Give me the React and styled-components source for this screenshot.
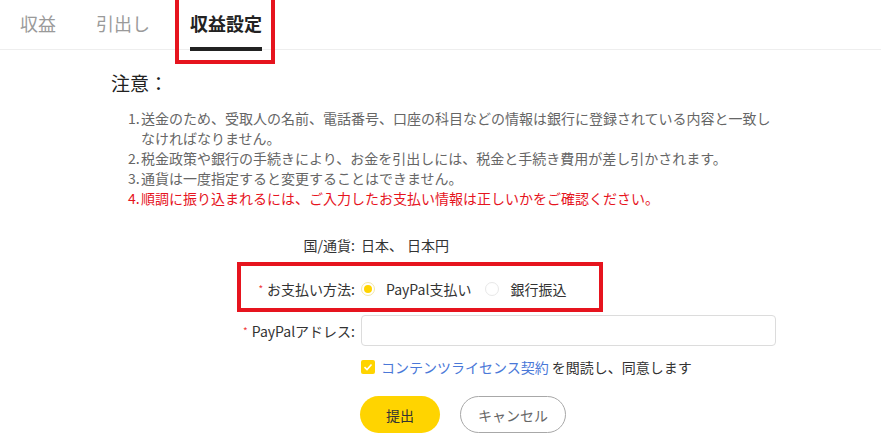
import React from "react";
import styled, { createGlobalStyle, css } from "styled-components";

const GlobalStyle = createGlobalStyle`
  html, body { margin: 0; padding: 0; background: #fff; }
  body { font-family: "Noto Sans CJK JP", "Noto Sans", sans-serif; color: #333; }
  * { box-sizing: border-box; }
`;

const Page = styled.div`
  width: 881px;
  height: 447px;
  overflow: hidden;
  background: #fff;
`;

const TabBar = styled.div`
  display: flex;
  height: 50px;
  border-bottom: 1px solid #eeeeee;
`;

const Tab = styled.div`
  position: relative;
  height: 50px;
  padding: 12px 20px 0;
  font-size: 18px;
  line-height: 22px;
  color: #9a9a9a;
  ${(p) =>
    p.$active &&
    css`
      color: #222;
      font-weight: 700;
      &::after {
        content: "";
        position: absolute;
        left: 20px;
        right: 20px;
        bottom: -1px;
        height: 4px;
        background: #222;
      }
    `}
`;

const Highlight = styled.span`
  position: absolute;
  left: ${(p) => p.$left}px;
  top: ${(p) => p.$top}px;
  width: ${(p) => p.$width}px;
  height: ${(p) => p.$height}px;
  border: 4px solid #e6141e;
  pointer-events: none;
`;

const Content = styled.div`
  padding: 20px 0 0 111px;
`;

const NoticeTitle = styled.h2`
  margin: 0;
  font-size: 19px;
  font-weight: 400;
  line-height: 26px;
  color: #222;
`;

const NoticeList = styled.ol`
  list-style: none;
  margin: 12px 0 0 17px;
  padding: 0;
  width: 660px;
`;

const NoticeItem = styled.li`
  display: flex;
  font-size: 14px;
  line-height: 20px;
  color: ${(p) => (p.$warn ? "#e6141e" : "#666")};
`;

const Num = styled.span`
  flex: 0 0 13px;
`;

const ItemText = styled.span`
  width: 640px;
`;

const Form = styled.div`
  display: flex;
  flex-direction: column;
  margin-top: 21px;
`;

const Row = styled.div`
  position: relative;
  display: grid;
  grid-template-columns: 250px auto;
  align-items: center;
  min-height: ${(p) => p.$h || 32}px;
  margin-top: ${(p) => p.$mt || 0}px;
  font-size: 14px;
  color: #333;
`;

const Label = styled.div`
  text-align: right;
  padding-right: 6px;
  font-size: 14px;
  line-height: 20px;
  color: #333;
  white-space: nowrap;
`;

const Req = styled.span`
  color: #f03a3a;
  font-size: 10px;
  margin-right: 4px;
  vertical-align: 2px;
`;

const Value = styled.div`
  line-height: 20px;
`;

const ValuePart = styled.span`
  margin-left: ${(p) => p.$ml || 0}px;
`;

const RadioGroup = styled.div`
  display: flex;
  align-items: center;
  gap: 14px;
`;

const RadioOption = styled.label`
  display: inline-flex;
  align-items: center;
  gap: 11px;
  line-height: 20px;
  color: #333;
`;

const RadioCircle = styled.span`
  position: relative;
  width: 14px;
  height: 14px;
  border-radius: 50%;
  border: 1px solid ${(p) => (p.$checked ? "#f3e6a6" : "#e8e8e8")};
  background: #fff;
  &::after {
    content: "";
    display: ${(p) => (p.$checked ? "block" : "none")};
    position: absolute;
    left: 2px;
    top: 2px;
    width: 8px;
    height: 8px;
    border-radius: 50%;
    background: #ffd400;
  }
`;

const Input = styled.input`
  width: 415px;
  height: 31px;
  border: 1px solid #dcdcdc;
  border-radius: 4px;
  outline: none;
  padding: 0 10px;
  font: inherit;
`;

const Agree = styled.div`
  display: flex;
  align-items: center;
  gap: 6px;
  line-height: 20px;
  color: #333;
`;

const CheckBox = styled.span`
  display: inline-flex;
  align-items: center;
  justify-content: center;
  width: 14px;
  height: 14px;
  border-radius: 2px;
  background: #ffd400;
`;

const Link = styled.a`
  color: #4a78d8;
  text-decoration: none;
`;

const Buttons = styled.div`
  display: flex;
  gap: 20px;
  margin-left: -1px;
`;

const Button = styled.button`
  height: 37px;
  width: ${(p) => p.$w}px;
  border-radius: 19px;
  font-family: inherit;
  font-size: 14px;
  cursor: pointer;
  ${(p) =>
    p.$primary
      ? css`
          background: #ffd400;
          border: none;
          color: #333;
        `
      : css`
          background: #fff;
          border: 1px solid #a8a8a8;
          color: #666;
        `}
`;

export default function App() {
  return (
    <Page>
      <GlobalStyle />
      <TabBar>
        <Tab>収益</Tab>
        <Tab>引出し</Tab>
        <Tab $active>
          収益設定
          <Highlight $left={5} $top={-4} $width={100} $height={68} />
        </Tab>
      </TabBar>
      <Content>
        <NoticeTitle>注意：</NoticeTitle>
        <NoticeList>
          <NoticeItem>
            <Num>1.</Num>
            <ItemText>
              送金のため、受取人の名前、電話番号、口座の科目などの情報は銀行に登録されている内容と一致しなければなりません。
            </ItemText>
          </NoticeItem>
          <NoticeItem>
            <Num>2.</Num>
            <ItemText>税金政策や銀行の手続きにより、お金を引出しには、税金と手続き費用が差し引かされます。</ItemText>
          </NoticeItem>
          <NoticeItem>
            <Num>3.</Num>
            <ItemText>通貨は一度指定すると変更することはできません。</ItemText>
          </NoticeItem>
          <NoticeItem $warn>
            <Num>4.</Num>
            <ItemText>順調に振り込まれるには、ご入力したお支払い情報は正しいかをご確認ください。</ItemText>
          </NoticeItem>
        </NoticeList>
        <Form>
          <Row>
            <Label>国/通貨:</Label>
            <Value>
              <ValuePart>日本、</ValuePart>
              <ValuePart $ml={4}>日本円</ValuePart>
            </Value>
          </Row>
          <Row $mt={12}>
            <Label>
              <Req>*</Req>お支払い方法:
            </Label>
            <RadioGroup>
              <RadioOption>
                <RadioCircle $checked />
                PayPal支払い
              </RadioOption>
              <RadioOption>
                <RadioCircle />
                銀行振込
              </RadioOption>
            </RadioGroup>
            <Highlight $left={126} $top={-11} $width={366} $height={50} />
          </Row>
          <Row $mt={10} $h={31}>
            <Label>
              <Req>*</Req>PayPalアドレス:
            </Label>
            <Input />
          </Row>
          <Row $mt={11} $h={20}>
            <span />
            <Agree>
              <CheckBox>
                <svg width="10" height="10" viewBox="0 0 10 10">
                  <path d="M1.5 5.2 L4 7.5 L8.5 2.5" fill="none" stroke="#fff" strokeWidth="1.6" />
                </svg>
              </CheckBox>
              <span>
                <Link>コンテンツライセンス契約</Link> を閲読し、同意します
              </span>
            </Agree>
          </Row>
          <Row $mt={19} $h={37}>
            <span />
            <Buttons>
              <Button $primary $w={80}>提出</Button>
              <Button $w={106}>キャンセル</Button>
            </Buttons>
          </Row>
        </Form>
      </Content>
    </Page>
  );
}
